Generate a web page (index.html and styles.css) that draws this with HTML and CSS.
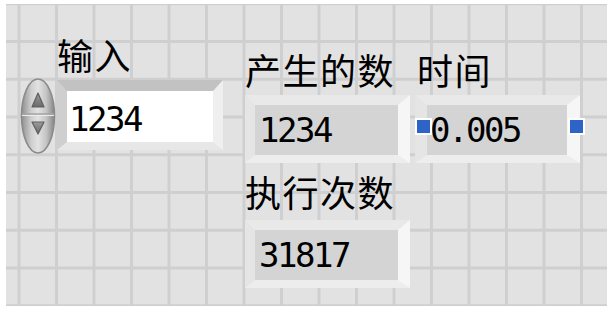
FILE: index.html
```html
<!DOCTYPE html>
<html lang="zh">
<head>
<meta charset="utf-8">
<title>前面板</title>
<link rel="stylesheet" href="styles.css">
</head>
<body>
<div class="panel">
  <div class="col col-input">
    <div class="label label-input">输入</div>
    <div class="control">
      <svg class="spinner" width="36" height="76" viewBox="0 0 36 76">
        <defs>
          <linearGradient id="sgh" x1="0" y1="0" x2="1" y2="0">
            <stop offset="0" stop-color="#8e8e8e"/>
            <stop offset="0.3" stop-color="#cfcfcf"/>
            <stop offset="0.5" stop-color="#e2e2e2"/>
            <stop offset="0.75" stop-color="#c4c4c4"/>
            <stop offset="1" stop-color="#858585"/>
          </linearGradient>
          <linearGradient id="arr" x1="0" y1="0" x2="0" y2="1">
            <stop offset="0" stop-color="#9c9c9c"/>
            <stop offset="1" stop-color="#6a6a6a"/>
          </linearGradient>
        </defs>
        <ellipse cx="18" cy="38" rx="16.5" ry="37" fill="url(#sgh)" stroke="#8a8a8a" stroke-width="1.5"/>
        <line x1="2" y1="36" x2="34" y2="36" stroke="#a4a4a4" stroke-width="1.5"/>
        <line x1="2" y1="37.5" x2="34" y2="37.5" stroke="#ececec" stroke-width="1"/>
        <path d="M18 15 L24 29 L12 29 Z" fill="url(#arr)" stroke="#5e5e5e" stroke-width="1.2" stroke-linejoin="round"/>
        <path d="M12 44 L24 44 L18 56 Z" fill="url(#arr)" stroke="#5e5e5e" stroke-width="1.2" stroke-linejoin="round"/>
      </svg>
      <div class="ctl-frame"><div class="ctl-field">1234</div></div>
    </div>
  </div>
  <div class="col col-mid">
    <div class="label">产生的数</div>
    <div class="ind-frame"><div class="ind-fill">1234</div></div>
    <div class="label label-count">执行次数</div>
    <div class="ind-frame ind-count"><div class="ind-fill">31817</div></div>
  </div>
  <div class="col col-time">
    <div class="label label-time">时间</div>
    <div class="ind-frame ind-time">
      <div class="ind-fill">0.005</div>
      <span class="marker marker-l"></span>
      <span class="marker marker-r"></span>
    </div>
  </div>
</div>
</body>
</html>
```

FILE: styles.css
```css
html, body {
  margin: 0;
  padding: 0;
  background: #ffffff;
}

.panel {
  margin: 4px 0 0 6px;
  width: 601px;
  height: 302px;
  overflow: hidden;
  display: flex;
  align-items: flex-start;
  background-color: #e2e2e2;
  background-image:
    linear-gradient(to right, #cfcfcf 3px, transparent 3px),
    linear-gradient(to bottom, #cfcfcf 3px, transparent 3px);
  background-size: 37.5px 37.75px;
  background-position: 11.5px 36px;
}

.col {
  display: flex;
  flex-direction: column;
  align-items: flex-start;
}

.label {
  font-family: "Noto Sans CJK SC", "Noto Sans CJK JP", sans-serif;
  font-size: 36px;
  line-height: 36px;
  height: 36px;
  letter-spacing: 1.5px;
  color: #000000;
  white-space: nowrap;
}

/* 输入 control */
.col-input {
  margin-left: 14px;
  padding-top: 32px;
}

.label-input {
  margin-left: 37px;
}

.control {
  display: flex;
  align-items: flex-start;
  margin-top: 6px;
}

.spinner {
  display: block;
  width: 36px;
  height: 76px;
}

.ctl-frame {
  margin-left: 1px;
  margin-top: 2px;
  border-style: solid;
  border-width: 11px 10px 8px 10px;
  border-color: #c2c2c2 #efefef #e7e7e7 #cfcfcf;
}

.ctl-field {
  width: 146px;
  height: 51px;
  box-sizing: border-box;
  padding: 6px 0 0 2px;
  background: #ffffff;
  font-family: "DejaVu Sans Mono", monospace;
  font-size: 34px;
  line-height: 45px;
  letter-spacing: -2.5px;
  color: #000000;
}

/* indicators */
.col-mid {
  margin-left: 22px;
  padding-top: 47px;
}

.ind-frame {
  position: relative;
  margin-top: 8px;
  border-style: solid;
  border-width: 10px 12px 8px 10px;
  border-color: #e9e9e9 #f6f6f6 #ededed #e5e5e5;
}

.ind-fill {
  width: 143px;
  height: 50px;
  box-sizing: border-box;
  padding-left: 4px;
  background: #d4d4d4;
  font-family: "DejaVu Sans Mono", monospace;
  font-size: 34px;
  line-height: 50px;
  letter-spacing: -2.5px;
  color: #000000;
}

.label-count {
  margin-top: 10px;
}

.ind-count {
  margin-top: 11px;
}

.col-time {
  margin-left: 5px;
  padding-top: 47px;
}

.label-time {
  margin-left: 2px;
}

.ind-time {
  border-width: 10px 13px 8px 12px;
}

.ind-time .ind-fill {
  width: 140px;
  padding-left: 3px;
}

.marker {
  position: absolute;
  top: 13px;
  width: 13px;
  height: 13px;
  background: #2e63c7;
  border: 2px solid #ffffff;
}

.marker-l {
  left: -12px;
}

.marker-r {
  left: 141px;
}
```
